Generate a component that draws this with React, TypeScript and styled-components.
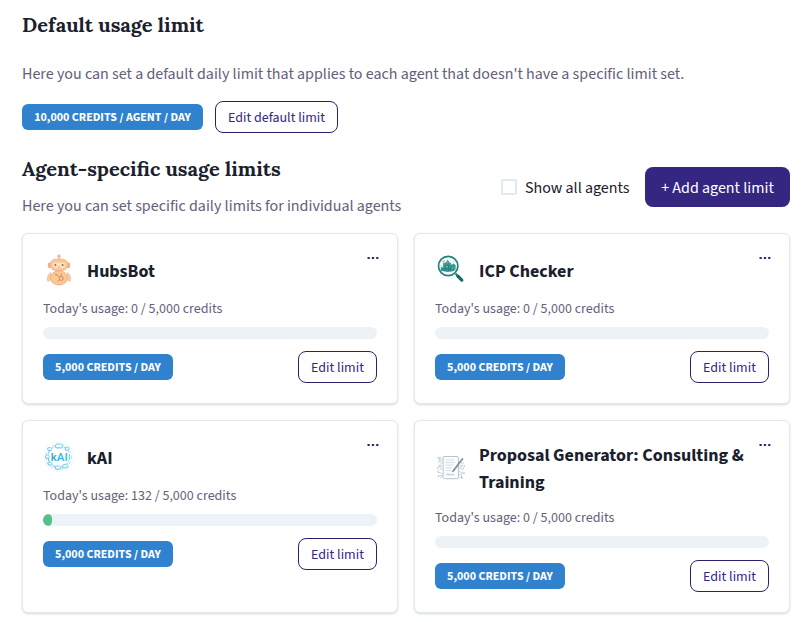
import React from "react";
import styled, { createGlobalStyle } from "styled-components";

const SANS = `"Source Sans 3", "Source Sans Pro", "Noto Sans CJK SC", "Noto Sans", sans-serif`;

const GlobalStyle = createGlobalStyle`
  *, *::before, *::after { box-sizing: border-box; }
  body { margin: 0; background: #fff; color: #1a202c; font-family: ${SANS}; font-size: 16px; line-height: 24px; }
  h2, h3, p { margin: 0; }
  button { font-family: inherit; cursor: pointer; }
`;

const Page = styled.main`
  width: 809px;
  height: 622px;
  padding: 10px 19px 0 22px;
  overflow: hidden;
`;

const Heading = styled.h2`
  font: 700 20px/30px Lora, "Liberation Serif", serif;
  white-space: nowrap;
`;

const Description = styled.p`
  color: #656079;
  font-size: 16px;
  white-space: nowrap;
`;

const DefaultSection = styled.section`
  display: flex;
  flex-direction: column;
  ${Description} { margin-top: 22px; }
`;

const DefaultActions = styled.div`
  display: flex;
  align-items: center;
  gap: 12px;
  margin-top: 15px;
`;

const Badge = styled.span<{ $width: number }>`
  display: flex;
  align-items: center;
  justify-content: center;
  width: ${(p) => p.$width}px;
  height: 26px;
  padding-top: 2px;
  border-radius: 6px;
  background: #3182ce;
  color: #fff;
  font-size: 12px;
  font-weight: 700;
  line-height: 18px;
  white-space: nowrap;
`;

const OutlineButton = styled.button<{ $width: number }>`
  width: ${(p) => p.$width}px;
  height: 32px;
  padding: 2px 0 0;
  border: 1px solid #2d1f6e;
  border-radius: 8px;
  background: #fff;
  color: #35267f;
  font-size: 14px;
  line-height: 18px;
  white-space: nowrap;
`;

const AgentHeader = styled.section`
  display: flex;
  align-items: center;
  justify-content: space-between;
  height: 80px;
  margin-top: 14px;
`;

const AgentIntro = styled.div`
  display: flex;
  flex-direction: column;
  gap: 10px;
  margin-top: -3px;
`;

const HeaderActions = styled.div`
  display: flex;
  align-items: center;
  gap: 15px;
`;

const CheckLabel = styled.label`
  display: flex;
  align-items: center;
  gap: 8px;
  font-size: 16px;
  white-space: nowrap;
`;

const CheckText = styled.span`
  padding-top: 2px;
  margin-right: 0.5px;
`;

const Checkbox = styled.input`
  appearance: none;
  width: 16px;
  height: 16px;
  margin: 0;
  border: 2px solid #e2e8f0;
  border-radius: 2px;
`;

const PrimaryButton = styled.button`
  width: 145px;
  height: 40px;
  padding: 2px 0 0;
  border: 0;
  border-radius: 8px;
  background: #352682;
  color: #fff;
  font-size: 16px;
  line-height: 24px;
  white-space: nowrap;
`;

const CardGrid = styled.div`
  display: grid;
  grid-template-columns: 376px 376px;
  grid-template-rows: 171px 193px;
  gap: 16px;
  margin-top: 6px;
`;

const Card = styled.article`
  position: relative;
  padding: 20px;
  border: 1px solid #e2e8f0;
  border-radius: 6px;
  background: #fff;
  box-shadow: 0 1px 3px rgba(0, 0, 0, 0.1), 0 1px 2px rgba(0, 0, 0, 0.06);
`;

const CardHeader = styled.header`
  display: flex;
  align-items: center;
  gap: 12px;
  min-height: 32px;
`;

const Avatar = styled.svg`
  flex: none;
  width: 32px;
  height: 32px;
`;

const CardTitle = styled.h3`
  max-width: 275px;
  margin: 1px 0 -1px;
  font-size: 18px;
  font-weight: 700;
  line-height: 27px;
`;

const MenuButton = styled.button`
  position: absolute;
  top: 18px;
  right: 18px;
  display: flex;
  padding: 4px 0;
  border: 0;
  background: none;
`;

const Usage = styled.p`
  margin-top: 13px;
  color: #656079;
  font-size: 14px;
  line-height: 21px;
`;

const Track = styled.div`
  height: 12px;
  margin-top: 7px;
  border-radius: 6px;
  background: #edf2f7;
  overflow: hidden;
`;

const Fill = styled.div`
  height: 100%;
  background: #54c08a;
  border-radius: 6px;
`;

const CardActions = styled.footer`
  display: flex;
  align-items: center;
  justify-content: space-between;
  margin-top: 12px;
`;

const RobotIcon = () => (
  <Avatar viewBox="0 0 32 32">
    <path d="M16 6V3" stroke="#e3a57c" strokeWidth="1" />
    <circle cx="16" cy="2.2" r="1.4" fill="#f5bf93" stroke="#e3a57c" strokeWidth=".4" />
    <rect x="4.9" y="8.4" width="3.2" height="5.6" rx="1.5" fill="#efb08a" />
    <rect x="23.9" y="8.4" width="3.2" height="5.6" rx="1.5" fill="#efb08a" />
    <rect x="7" y="5.2" width="18" height="11.2" rx="5.6" fill="#fcc994" stroke="#e8a880" strokeWidth=".7" />
    <rect x="9.3" y="8.2" width="13.4" height="6.2" rx="3.1" fill="#fee1bd" stroke="#f2bd90" strokeWidth=".5" />
    <circle cx="12.4" cy="11" r="1" fill="#a9684e" />
    <circle cx="19.6" cy="11" r="1" fill="#a9684e" />
    <path d="M14.8 12.6q1.2.8 2.4 0" fill="none" stroke="#c98a68" strokeWidth=".6" />
    <path d="M7.6 18.5q-3.6 2.4-3.2 7.4.1 1.6 1.2 1.4 1.5-.4 1.6-2.4zM24.4 18.5q3.6 2.4 3.2 7.4-.1 1.6-1.2 1.4-1.5-.4-1.6-2.4z" fill="#fbd0a8" stroke="#e8ae8b" strokeWidth=".6" />
    <ellipse cx="16" cy="23.9" rx="8.6" ry="7.1" fill="#fbc890" stroke="#e5a27a" strokeWidth=".7" />
    <path d="M13 20.4l3.7 2.8M18.3 19.5v2.8M15.9 26.2l-1.5 1.6" fill="none" stroke="#cf8a66" strokeWidth=".9" />
    <circle cx="18.2" cy="24.4" r="2" fill="none" stroke="#cf8a66" strokeWidth="1" />
    <circle cx="12.9" cy="20.3" r=".8" fill="#cf8a66" />
  </Avatar>
);

const MagnifierIcon = () => (
  <Avatar viewBox="0 0 32 32">
    <path d="M20.6 19.6l2.6 2.7" stroke="#277b80" strokeWidth="2" />
    <path d="M22.8 22.1l4 4" stroke="#17666e" strokeWidth="3.2" strokeLinecap="round" />
    <circle cx="13.2" cy="12" r="9.7" fill="#f6faf9" stroke="#23817f" strokeWidth="1.7" />
    <path d="M5.8 16.8v-3.3l2.3-1V9.2l2.8-.8 1.7-2.7 2 2.9 1.6.7v1.6l2.4-1.3 2.1 1.6-.2 4.6-2.2 1.5-5.9.6z" fill="#3c9992" />
    <path d="M10.2 17v-5.6h3.3v5.8M15.6 17.3V13h3M6.8 14.9h12.4" fill="none" stroke="#22777a" strokeWidth=".7" />
    <path d="M11 12.5h1.5M16.6 14h1.8M7.8 13.4h1M12.2 8.8h1" stroke="#9dd2c8" strokeWidth=".9" />
    <circle cx="8.7" cy="7.5" r="1.2" fill="#f4a68d" />
    <path d="M18.2 7l1.2 1.8M5.5 11.8H7" stroke="#8bc9c1" strokeWidth=".7" />
  </Avatar>
);

const KaiIcon = () => (
  <Avatar viewBox="0 0 32 32">
    <defs>
      <linearGradient id="kai" x1="0" y1="1" x2="1" y2="0">
        <stop stopColor="#4a9bea" />
        <stop offset=".5" stopColor="#4bc5e4" />
        <stop offset="1" stopColor="#6bd3cf" />
      </linearGradient>
      <linearGradient id="kaiText">
        <stop stopColor="#3a9ce6" />
        <stop offset="1" stopColor="#2dc5de" />
      </linearGradient>
    </defs>
    <circle cx="15.8" cy="15.6" r="15.2" fill="#fdfefe" stroke="#e8eff1" strokeWidth=".5" />
    <circle cx="15.8" cy="15.6" r="10.8" fill="none" stroke="url(#kai)" strokeWidth=".9" strokeDasharray="5 1.2 2 1" />
    <circle cx="15.8" cy="15.6" r="12.7" fill="none" stroke="url(#kai)" strokeWidth=".7" strokeDasharray="2.5 2.7" opacity=".7" />
    <g fill="#effcfc" stroke="url(#kai)" strokeWidth=".8">
      <rect x="12.5" y="3.1" width="7" height="3.8" rx="1.4" />
      <rect x="22.4" y="6.2" width="3.6" height="3" rx="1" />
      <rect x="4.8" y="6.6" width="3.8" height="3" rx="1" />
      <rect x="2.6" y="14" width="3.6" height="3.4" rx="1" />
      <rect x="5" y="21" width="4" height="3" rx="1" />
      <rect x="12.2" y="25" width="5.4" height="3.2" rx="1.2" />
      <rect x="19.6" y="23.6" width="5.4" height="3.2" rx="1.2" />
    </g>
    <rect x="7" y="11" width="18.6" height="9.4" fill="#fdfefe" />
    <text x="16.2" y="19.8" textAnchor="middle" textLength="17" lengthAdjust="spacingAndGlyphs" fontFamily="Roboto, sans-serif" fontSize="11.5" fontWeight="500" fill="url(#kaiText)">kAI</text>
  </Avatar>
);

const ProposalIcon = () => (
  <Avatar viewBox="0 0 32 32">
    <g fill="none" stroke="#b3bec8" strokeWidth=".7">
      <path d="M3 6h1.5v3h3M5 4.5v2l2.5 1M2.8 10h2l2 2M3 14h4M5 12.5v4l2.5 1M3 18v2.5h2.5l2 2M3.5 23.5h4M5 26l2.5-1.4" />
      <path d="M24.5 14h3M24.5 17h3.5l1-2M24 19l2 2h3M24 22.6h2.5v3M24 16l4-3.4M24.5 25l3 1.6M26 11h3" />
    </g>
    <g fill="#a3afbb">
      <circle cx="3" cy="5.6" r=".7" /><circle cx="2.8" cy="16" r=".7" /><circle cx="3.3" cy="24.4" r=".7" />
      <circle cx="29.2" cy="14" r=".7" /><circle cx="29" cy="21" r=".7" /><circle cx="27" cy="25.4" r=".7" />
    </g>
    <path d="M9 4.5h13q1.4 0 1.4 1.4v19.4q0 1.4-1.4 1.4H9.5q-1.4 0-1.4-1.4V5.5q0-1 .9-1z" fill="#fafcfe" stroke="#b7c3cf" strokeWidth="1" />
    <path d="M10.8 8h8.5M10.8 10.6h9.2M10.8 13.2h7.5M10.8 15.8h6M10.8 18.4h5" stroke="#cbd4dc" strokeWidth=".8" />
    <path d="M11 23.4q2.4-2.6 2.6-.7.3 1.1 1.9-.4 1 1.3 3.8.3" fill="none" stroke="#97a5b2" strokeWidth=".7" />
    <path d="M18 18.3l9.2-12 .9.7-9.2 12z" fill="#98a6b4" stroke="#66798b" strokeWidth=".7" />
    <path d="M16.8 20.4l1.1-2 1.1.9z" fill="#43576a" />
  </Avatar>
);

const DotsIcon = () => (
  <svg width="12" height="12" viewBox="0 0 12 12" fill="#2d1f6e">
    <rect x="0.5" y="1" width="2.3" height="2" rx=".4" />
    <rect x="4.8" y="1" width="2.3" height="2" rx=".4" />
    <rect x="9.1" y="1" width="2.3" height="2" rx=".4" />
  </svg>
);

const agents = [
  { name: "HubsBot", used: 0, Icon: RobotIcon },
  { name: "ICP Checker", used: 0, Icon: MagnifierIcon },
  { name: "kAI", used: 132, Icon: KaiIcon },
  { name: "Proposal Generator: Consulting & Training", used: 0, Icon: ProposalIcon },
];

const LIMIT = 5000;

export default function App() {
  return (
    <>
      <GlobalStyle />
      <Page>
        <DefaultSection>
          <Heading>Default usage limit</Heading>
          <Description>Here you can set a default daily limit that applies to each agent that doesn't have a specific limit set.</Description>
          <DefaultActions>
            <Badge $width={181}>10,000 CREDITS / AGENT / DAY</Badge>
            <OutlineButton $width={123}>Edit default limit</OutlineButton>
          </DefaultActions>
        </DefaultSection>
        <AgentHeader>
          <AgentIntro>
            <Heading>Agent-specific usage limits</Heading>
            <Description>Here you can set specific daily limits for individual agents</Description>
          </AgentIntro>
          <HeaderActions>
            <CheckLabel><Checkbox type="checkbox" /><CheckText>Show all agents</CheckText></CheckLabel>
            <PrimaryButton>+ Add agent limit</PrimaryButton>
          </HeaderActions>
        </AgentHeader>
        <CardGrid>
          {agents.map(({ name, used, Icon }) => (
            <Card key={name}>
              <MenuButton aria-label="Agent options"><DotsIcon /></MenuButton>
              <CardHeader><Icon /><CardTitle>{name}</CardTitle></CardHeader>
              <Usage>Today's usage: {used} / 5,000 credits</Usage>
              <Track><Fill style={{ width: `${(used / LIMIT) * 100}%` }} /></Track>
              <CardActions>
                <Badge $width={130}>5,000 CREDITS / DAY</Badge>
                <OutlineButton $width={79}>Edit limit</OutlineButton>
              </CardActions>
            </Card>
          ))}
        </CardGrid>
      </Page>
    </>
  );
}
